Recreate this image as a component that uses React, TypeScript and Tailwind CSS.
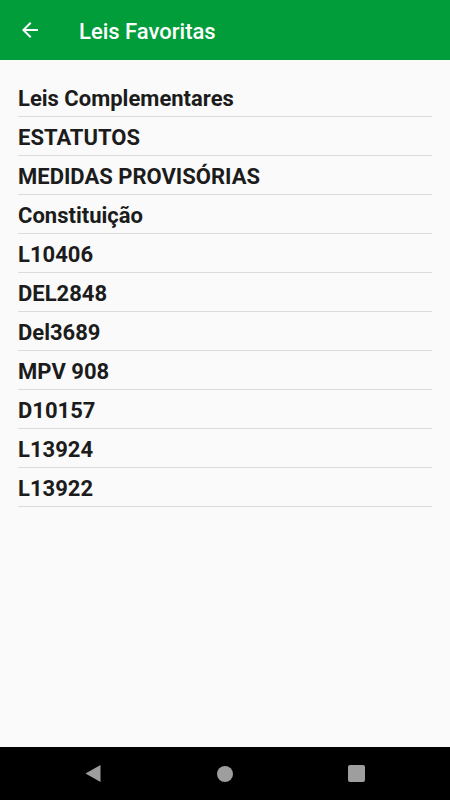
import React from 'react';

const favoritos = [
    'Leis Complementares',
    'ESTATUTOS',
    'MEDIDAS PROVISÓRIAS',
    'Constituição',
    'L10406',
    'DEL2848',
    'Del3689',
    'MPV 908',
    'D10157',
    'L13924',
    'L13922',
];

export default function App() {
    return (
        <div className="h-[800px] w-[450px] flex flex-col bg-[#fafafa] font-['Roboto',sans-serif]">
            {/* Toolbar */}
            <header className="h-[60px] flex-shrink-0 bg-[#009d3a] flex items-center">
                <button className="ml-[18px] w-6 h-6 text-white">
                    <svg viewBox="0 0 24 24" className="w-6 h-6" fill="currentColor">
                        <path d="M20 11H7.83l5.59-5.59L12 4l-8 8 8 8 1.41-1.41L7.83 13H20v-2z" />
                    </svg>
                </button>
                <h1 className="ml-[37px] mt-[3px] text-[22px] font-medium text-white leading-[26px]">Leis Favoritas</h1>
            </header>

            {/* Lista */}
            <main className="flex-1 pt-[18px] px-[18px]">
                <ul>
                    {favoritos.map(nome => (
                        <li
                            key={nome}
                            className="h-[39px] pt-[8px] border-b border-[#dcdcdc] text-[22px] leading-[26px] font-bold text-[#1c1c1c]"
                        >
                            {nome}
                        </li>
                    ))}
                </ul>
            </main>

            {/* Navigation bar */}
            <nav className="h-[53px] flex-shrink-0 bg-black flex items-center">
                <div className="flex-1 flex justify-center">
                    <svg viewBox="0 0 16 17" className="w-4 h-[17px] ml-[-32px]" fill="#9e9e9e">
                        <path d="M15.5 0 L15.5 17 L0.5 8.5 Z" />
                    </svg>
                </div>
                <div className="w-4 h-4 rounded-full bg-[#9e9e9e]" />
                <div className="flex-1 flex justify-center">
                    <div className="w-[17px] h-[17px] rounded-[2px] bg-[#9e9e9e] ml-[30px]" />
                </div>
            </nav>
        </div>
    );
}
